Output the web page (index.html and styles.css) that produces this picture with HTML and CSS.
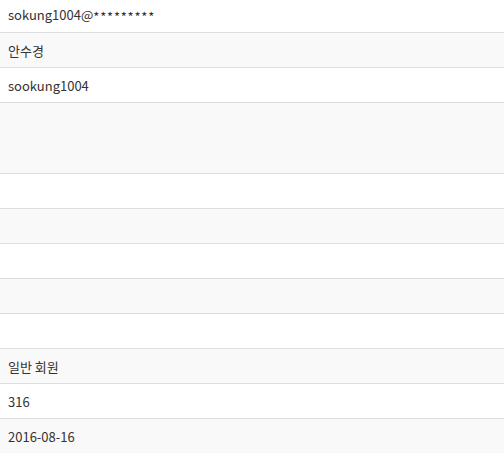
FILE: index.html
```html
<!DOCTYPE html>
<html>
<head>
<meta charset="utf-8">
<link rel="stylesheet" href="styles.css">
</head>
<body>
<div class="list">
  <div class="row first">sokung1004@<span class="mask">*********</span></div>
  <div class="row">안수경</div>
  <div class="row">sookung1004</div>
  <div class="row tall"></div>
  <div class="row"></div>
  <div class="row"></div>
  <div class="row"></div>
  <div class="row"></div>
  <div class="row"></div>
  <div class="row">일반 회원</div>
  <div class="row">316</div>
  <div class="row">2016-08-16</div>
</div>
</body>
</html>
```
FILE: styles.css
```css
html, body {
  margin: 0;
  padding: 0;
  background: #fff;
}
body {
  font-family: "Noto Sans CJK KR", "Noto Sans", sans-serif;
  font-size: 13px;
  color: #333;
  overflow: hidden;
}
.list {
  display: flex;
  flex-direction: column;
}
.row {
  box-sizing: border-box;
  height: 35px;
  padding: 0 8px;
  display: flex;
  align-items: center;
  border-bottom: 1px solid #ddd;
  background: #fff;
  white-space: pre;
}
.row:nth-child(even) {
  background: #f9f9f9;
}
.row.first {
  height: 33px;
  padding-bottom: 3px;
}
.row.tall {
  height: 71px;
}
.mask {
  letter-spacing: 0.8px;
  position: relative;
  top: 2px;
}
```
